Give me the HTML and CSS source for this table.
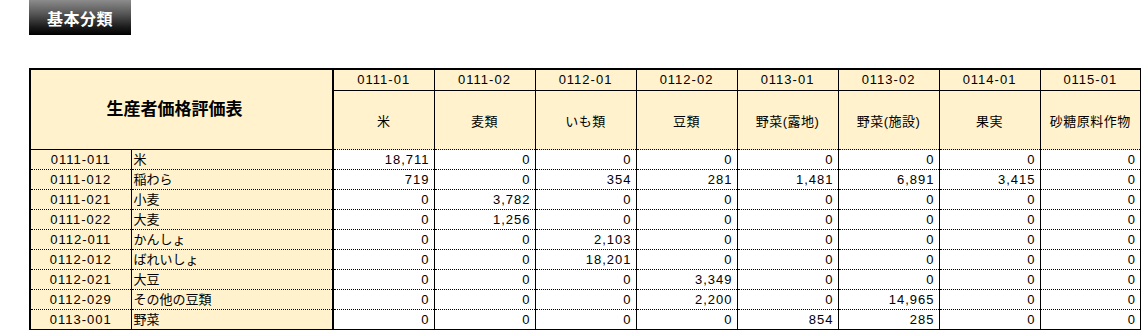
FILE: index.html
```html
<!DOCTYPE html>
<html lang="ja">
<head>
<meta charset="utf-8">
<link rel="stylesheet" href="styles.css">
</head>
<body>
<div class="page">
  <div class="title-btn">基本分類</div>
  <table class="grid">
    <colgroup>
      <col class="c-code"><col class="c-name">
      <col class="c-val"><col class="c-val"><col class="c-val"><col class="c-val">
      <col class="c-val"><col class="c-val"><col class="c-val"><col class="c-val">
    </colgroup>
    <thead>
      <tr class="h1">
        <th class="corner" colspan="2" rowspan="2">生産者価格評価表</th>
        <th>0111-01</th><th>0111-02</th><th>0112-01</th><th>0112-02</th>
        <th>0113-01</th><th>0113-02</th><th>0114-01</th><th>0115-01</th>
      </tr>
      <tr class="h2">
        <th>米</th><th>麦類</th><th>いも類</th><th>豆類</th>
        <th>野菜(露地)</th><th>野菜(施設)</th><th>果実</th><th>砂糖原料作物</th>
      </tr>
    </thead>
    <tbody>
      <tr><td class="code">0111-011</td><td class="name">米</td><td>18,711</td><td>0</td><td>0</td><td>0</td><td>0</td><td>0</td><td>0</td><td>0</td></tr>
      <tr><td class="code">0111-012</td><td class="name">稲わら</td><td>719</td><td>0</td><td>354</td><td>281</td><td>1,481</td><td>6,891</td><td>3,415</td><td>0</td></tr>
      <tr><td class="code">0111-021</td><td class="name">小麦</td><td>0</td><td>3,782</td><td>0</td><td>0</td><td>0</td><td>0</td><td>0</td><td>0</td></tr>
      <tr><td class="code">0111-022</td><td class="name">大麦</td><td>0</td><td>1,256</td><td>0</td><td>0</td><td>0</td><td>0</td><td>0</td><td>0</td></tr>
      <tr><td class="code">0112-011</td><td class="name">かんしょ</td><td>0</td><td>0</td><td>2,103</td><td>0</td><td>0</td><td>0</td><td>0</td><td>0</td></tr>
      <tr><td class="code">0112-012</td><td class="name">ばれいしょ</td><td>0</td><td>0</td><td>18,201</td><td>0</td><td>0</td><td>0</td><td>0</td><td>0</td></tr>
      <tr><td class="code">0112-021</td><td class="name">大豆</td><td>0</td><td>0</td><td>0</td><td>3,349</td><td>0</td><td>0</td><td>0</td><td>0</td></tr>
      <tr><td class="code">0112-029</td><td class="name">その他の豆類</td><td>0</td><td>0</td><td>0</td><td>2,200</td><td>0</td><td>14,965</td><td>0</td><td>0</td></tr>
      <tr><td class="code">0113-001</td><td class="name">野菜</td><td>0</td><td>0</td><td>0</td><td>0</td><td>854</td><td>285</td><td>0</td><td>0</td></tr>
    </tbody>
  </table>
</div>
</body>
</html>
```
FILE: styles.css
```css
html, body {
  margin: 0;
  padding: 0;
  background: #ffffff;
}
body {
  font-family: "Liberation Sans", "Noto Sans CJK JP", sans-serif;
  color: #000;
}
.page {
  padding-left: 29px;
}
.title-btn {
  width: 102px;
  height: 35px;
  box-sizing: border-box;
  background: linear-gradient(to bottom, #8c8c8c 0%, #555 40%, #1a1a1a 78%, #000 100%);
  color: #fff;
  font-family: "Noto Sans CJK JP", sans-serif;
  font-weight: bold;
  font-size: 16px;
  line-height: 37px;
  text-align: center;
  letter-spacing: 0.5px;
}
.grid {
  margin-top: 33px;
  border-collapse: collapse;
  table-layout: fixed;
  width: 1111px;
  font-size: 13px;
  letter-spacing: 1px;
  border: 2px solid #000;
}
.c-code { width: 101px; }
.c-name { width: 202px; }
.c-val { width: 101px; }
.grid th {
  background: #fff2cc;
  font-weight: normal;
  border: 1px solid #000;
  padding: 0;
  text-align: center;
}
.grid .h1 th {
  height: 20px;
  line-height: 20px;
}
.grid .h2 th {
  height: 58px;
  border-bottom: 1px dotted #000;
  letter-spacing: 0.5px;
}
.grid th.corner {
  font-family: "Noto Sans CJK JP", sans-serif;
  font-weight: bold;
  font-size: 17px;
  letter-spacing: 0;
  border-right: 2px solid #000;
  border-bottom: 1px solid #000;
  padding: 0 14px 4px 0;
}
.grid td {
  height: 19px;
  line-height: 19px;
  padding: 0 4px 0 0;
  border-left: 1px solid #000;
  border-right: 1px solid #000;
  border-bottom: 1px dotted #000;
  text-align: right;
  white-space: nowrap;
  overflow: hidden;
}
.grid td.code {
  background: #fff2cc;
  text-align: center;
  padding: 0;
}
.grid td.name {
  background: #fff2cc;
  text-align: left;
  padding: 0 0 0 2px;
  letter-spacing: 0;
  border-right: 2px solid #000;
}
.grid tbody tr:first-child td.code,
.grid tbody tr:first-child td.name {
  border-top: 1px solid #000;
}
```
